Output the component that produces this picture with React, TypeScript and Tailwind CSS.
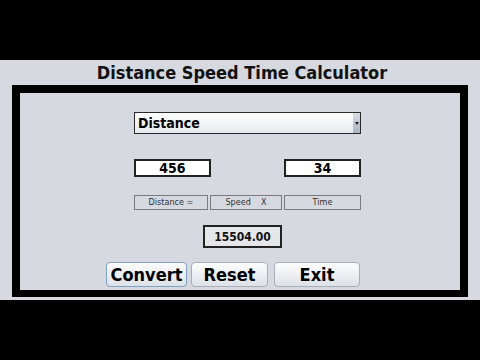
import React from "react";

const F = { fontFamily: '"DejaVu Sans Condensed", "DejaVu Sans", sans-serif' };

export default function App() {
  return (
    <div className="w-[480px] h-[360px] bg-black flex flex-col overflow-hidden" style={F}>
      <div className="h-[60px] shrink-0" />
      <div className="h-[240px] shrink-0 bg-[#d6d9df] flex flex-col">
        <div className="h-[25px] pt-[2px] flex justify-center text-[18px] font-bold text-[#111] leading-[22px] pl-[4px]">
          Distance Speed Time Calculator
        </div>
        <div className="ml-[12px] w-[456px] h-[212px] border-t-[8px] border-l-[8px] border-r-[8px] border-b-[7px] border-black bg-[#d6d9df] flex flex-col pl-[86px]">
          <div className="mt-[19px] ml-[28px] w-[227px] h-[22px] border border-[#2a2a2a] bg-gradient-to-b from-[#ffffff] to-[#e6e8ec] flex items-center relative">
            <span className="pl-[3px] text-[14px] font-bold text-black leading-none">Distance</span>
            <div className="absolute right-0 top-0 h-full w-[7px] bg-gradient-to-b from-[#d8dde5] to-[#aab4c2] flex items-center justify-center">
              <div className="w-0 h-0 border-l-[2px] border-r-[2px] border-t-[3px] border-l-transparent border-r-transparent border-t-[#222]" />
            </div>
          </div>
          <div className="mt-[25px] ml-[28px] flex gap-[73px]">
            <div className="w-[77px] h-[18px] border-2 border-[#222] bg-white flex items-center justify-center text-[14px] font-bold text-black leading-none">456</div>
            <div className="w-[77px] h-[18px] border-2 border-[#222] bg-white flex items-center justify-center text-[14px] font-bold text-black leading-none">34</div>
          </div>
          <div className="mt-[18px] ml-[28px] flex gap-[2px]">
            <div className="w-[74px] h-[15px] border border-[#7a7a7a] flex items-center justify-center text-[9px] text-[#333] leading-none whitespace-pre">Distance =</div>
            <div className="w-[72px] h-[15px] border border-[#7a7a7a] flex items-center justify-center text-[9px] text-[#333] leading-none whitespace-pre">Speed    X</div>
            <div className="w-[77px] h-[15px] border border-[#7a7a7a] flex items-center justify-center text-[9px] text-[#333] leading-none whitespace-pre">Time</div>
          </div>
          <div className="mt-[15px] ml-[97px] w-[79px] h-[23px] border-2 border-[#222] bg-[#e4e6ea] flex items-center justify-center text-[12px] font-bold text-[#111] leading-none">15504.00</div>
          <div className="mt-[14px] flex">
            <button className="w-[81px] h-[25px] rounded-[4px] border border-[#7f9fc6] bg-gradient-to-b from-[#fdfdfe] to-[#dde2e8] text-[18px] font-bold text-black leading-none flex items-center justify-center">Convert</button>
            <button className="ml-[4px] w-[77px] h-[25px] rounded-[4px] border border-[#a8aeb6] bg-gradient-to-b from-[#fdfdfe] to-[#dde2e8] text-[18px] font-bold text-black leading-none flex items-center justify-center">Reset</button>
            <button className="ml-[6px] w-[86px] h-[25px] rounded-[4px] border border-[#a8aeb6] bg-gradient-to-b from-[#fdfdfe] to-[#dde2e8] text-[18px] font-bold text-black leading-none flex items-center justify-center">Exit</button>
          </div>
        </div>
      </div>
    </div>
  );
}
